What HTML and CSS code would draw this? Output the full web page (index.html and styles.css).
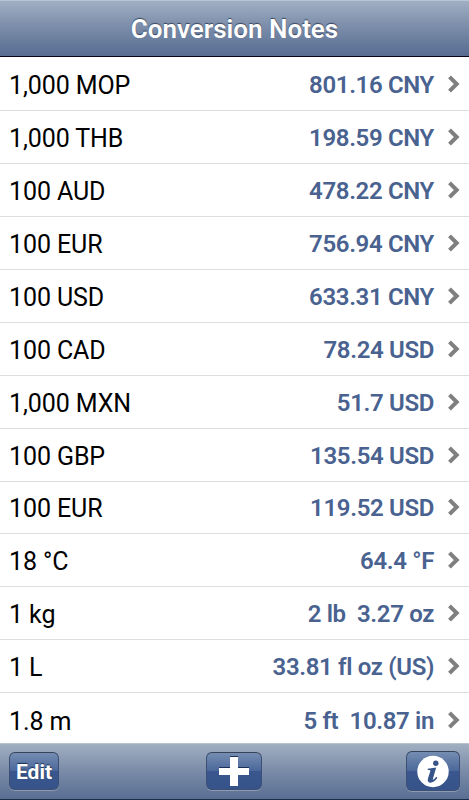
FILE: index.html
```html
<!DOCTYPE html>
<html lang="en">
<head>
    <meta charset="UTF-8">
    <meta name="viewport" content="width=device-width, initial-scale=1.0">
    <title>Conversion Notes</title>
    <link rel="stylesheet" href="styles.css">
</head>
<body>
<header class="header">
    <h1>Conversion Notes</h1>
</header>

<ul class="notes" id="notes"></ul>

<footer class="toolbar">
    <button class="btn btn-edit">Edit</button>
    <button class="btn btn-add" aria-label="Add">
        <svg width="30" height="31" viewBox="0 0 30 31">
            <path d="M11 0h8v11h11v8H19v11h-8V19H0v-8h11z" fill="#1d2f55"/>
            <path d="M11 1h8v11h11v7H19v11h-8V19H0v-7h11z" fill="#fff"/>
        </svg>
    </button>
    <button class="btn btn-info" aria-label="Info">
        <svg width="32" height="33" viewBox="0 0 32 33">
            <circle cx="16" cy="16.500" r="15.700" fill="#fff"/>
            <circle cx="18.800" cy="8.300" r="2.700" fill="#36548a"/>
            <path d="M10.800 13.800 19.200 12.400 16 23.600Q15.600 25.300 17 24.200L19.300 21.800 20.400 22.800C18 26.300 15.600 27.800 13.200 27.700 10.800 27.500 10.300 25.800 11 23.300L13.300 16.200Q13.700 15 12.200 15H10.600Z" fill="#36548a"/>
        </svg>
    </button>
</footer>

<script>
    const notes = [
        ["1,000 MOP", "801.16 CNY"],
        ["1,000 THB", "198.59 CNY"],
        ["100 AUD", "478.22 CNY"],
        ["100 EUR", "756.94 CNY"],
        ["100 USD", "633.31 CNY"],
        ["100 CAD", "78.24 USD"],
        ["1,000 MXN", "51.7 USD"],
        ["100 GBP", "135.54 USD"],
        ["100 EUR", "119.52 USD"],
        ["18 °C", "64.4 °F"],
        ["1 kg", "2 lb  3.27 oz"],
        ["1 L", "33.81 fl oz (US)"],
        ["1.8 m", "5 ft  10.87 in"]
    ];

    document.getElementById("notes").innerHTML = notes.map(([from, to]) => `
        <li class="note">
            <span class="from">${from}</span>
            <span class="to">${to}</span>
            <svg class="arrow" width="12" height="18" viewBox="0 0 12 18">
                <path d="M1.500 1.800 8.700 9 1.500 16.200" fill="none" stroke="#7f7f7f" stroke-width="4"/>
            </svg>
        </li>
    `).join("");
</script>
</body>
</html>
```
FILE: styles.css
```css
* {
    box-sizing: border-box;
}
body {
    margin: 0;
    height: 800px;
    display: flex;
    flex-direction: column;
    overflow: hidden;
    background-color: #fff;
    font-family: Roboto, sans-serif;
}
.header {
    flex: none;
    height: 57px;
    display: flex;
    align-items: center;
    justify-content: center;
    border-top: 1px solid #b9c5d4;
    border-bottom: 1px solid #05051c;
    background: linear-gradient(#a1afc3, #7c8eaa 45%, #566c91);
}
h1 {
    margin: 0;
    font-size: 26px;
    font-weight: 600;
    color: #fff;
    text-shadow: 0 -1px 1px #35445e;
}
.notes {
    flex: 1;
    margin: 0;
    padding: 1px 0 0;
    list-style: none;
    overflow: hidden;
}
.note {
    height: 52.95px;
    display: flex;
    align-items: center;
    padding: 2px 9px 0 9px;
    border-bottom: 1px solid #dedede;
    font-size: 25px;
    letter-spacing: -0.1px;
    white-space: pre;
}
.note:last-child {
    border-bottom: none;
}
.from {
    flex: 1;
    padding-top: 1px;
    color: #000;
}
.to {
    color: #49628f;
    font-size: 24px;
    font-weight: 600;
    letter-spacing: -0.35px;
}
.arrow {
    margin: 0 0 2px 14px;
}
/* bottom bar */
.toolbar {
    flex: none;
    height: 57px;
    display: flex;
    justify-content: space-between;
    padding: 8px 9px 0;
    border-top: 1px solid #b9c2cd;
    border-bottom: 1px solid #1d2d49;
    background: linear-gradient(#a1afc2, #7a8ca8 48%, #596e93);
}
.btn {
    display: flex;
    align-items: center;
    justify-content: center;
    height: 38px;
    padding: 0;
    border: 1px solid #3d5074;
    border-top-color: #36435a;
    border-radius: 6px;
    background: linear-gradient(#758db1, #4b689b 49%, #39578e 51%, #36548a);
    box-shadow: 0 1px 0 #8c9bb3;
    color: #fff;
    font-family: Roboto, sans-serif;
}
.btn-edit {
    width: 50px;
    padding-top: 2px;
    font-size: 21px;
    font-weight: 700;
    text-shadow: 0 -1px 1px #1d2f55;
}
.btn-add {
    width: 56px;
    margin-left: 3px;
}
.btn-info {
    width: 54px;
    height: 40px;
    margin-top: -1px;
}
```
